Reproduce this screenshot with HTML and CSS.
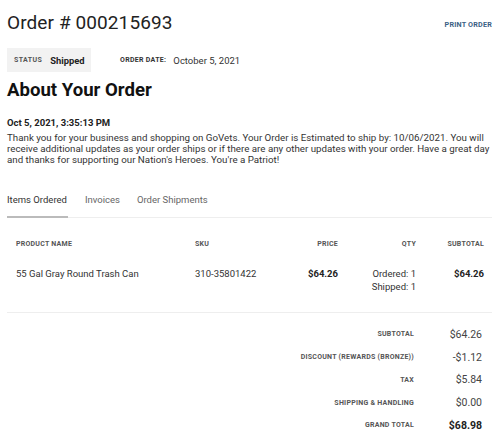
FILE: index.html
```html
<!DOCTYPE html>
<html>
<head>
<meta charset="utf-8">
<link rel="stylesheet" href="styles.css">
</head>
<body>
<div class="page">
  <div class="head">
    <h1 class="title">Order # 000215693</h1>
    <a class="print">PRINT ORDER</a>
  </div>
  <div class="meta">
    <div class="status"><span class="lbl">STATUS</span><span class="val">Shipped</span></div>
    <div class="date"><span class="lbl">ORDER DATE:</span><span class="dval">October 5, 2021</span></div>
  </div>
  <h2 class="about">About Your Order</h2>
  <div class="stamp">Oct 5, 2021, 3:35:13 PM</div>
  <p class="msg">Thank you for your business and shopping on GoVets. Your Order is Estimated to ship by: 10/06/2021. You will receive additional updates as your order ships or if there are any other updates with your order. Have a great day and thanks for supporting our Nation's Heroes. You're a Patriot!</p>
  <div class="tabs">
    <div class="tab active">Items Ordered</div>
    <div class="tab">Invoices</div>
    <div class="tab">Order Shipments</div>
  </div>
  <div class="items">
    <div class="row hdr">
      <div class="c-name">PRODUCT NAME</div>
      <div class="c-sku">SKU</div>
      <div class="c-price">PRICE</div>
      <div class="c-qty">QTY</div>
      <div class="c-sub">SUBTOTAL</div>
    </div>
    <div class="row item">
      <div class="c-name">55 Gal Gray Round Trash Can</div>
      <div class="c-sku">310-35801422</div>
      <div class="c-price b">$64.26</div>
      <div class="c-qty">Ordered: 1<br>Shipped: 1</div>
      <div class="c-sub b">$64.26</div>
    </div>
  </div>
  <div class="totals">
    <div class="trow"><span class="tl">SUBTOTAL</span><span class="tv">$64.26</span></div>
    <div class="trow"><span class="tl">DISCOUNT (REWARDS (BRONZE))</span><span class="tv">-$1.12</span></div>
    <div class="trow"><span class="tl">TAX</span><span class="tv">$5.84</span></div>
    <div class="trow"><span class="tl">SHIPPING &amp; HANDLING</span><span class="tv">$0.00</span></div>
    <div class="trow"><span class="tl">GRAND TOTAL</span><span class="tv b dark">$68.98</span></div>
  </div>
</div>
</body>
</html>
```

FILE: styles.css
```css
* { box-sizing: border-box; }
html, body { margin: 0; padding: 0; background: #fff; }
body { font-family: Roboto, "Noto Sans", sans-serif; color: #333; }
.page { padding: 10px 8px 0 7px; width: 500px; }
.head { display: flex; justify-content: space-between; align-items: center; height: 26px; }
.title { margin: 0; font-size: 19px; font-weight: 400; color: #222; letter-spacing: 0.1px; line-height: 26px; }
.print { font-size: 7.2px; font-weight: 700; color: #3a5f84; letter-spacing: 0.2px; margin-top: 2px; }
.meta { display: flex; align-items: center; margin-top: 12px; }
.status { background: #f2f2f2; height: 24px; width: 84px; display: flex; align-items: center; padding-left: 7px; }
.lbl { font-size: 7px; font-weight: 700; color: #555; letter-spacing: 0.4px; }
.val { font-size: 9.4px; font-weight: 700; color: #222; margin-left: 8px; }
.date { margin-left: 29px; display: flex; align-items: center; }
.date .lbl { color: #333; letter-spacing: 0.3px; }
.dval { font-size: 9.5px; color: #333; margin-left: 7px; }
.about { margin: 7px 0 0; font-size: 18.6px; font-weight: 700; color: #111; line-height: 22px; }
.stamp { margin-top: 16px; font-size: 9.5px; font-weight: 700; color: #222; line-height: 12px; }
.msg { margin: 3px 0 0; font-size: 9.75px; line-height: 11px; color: #333; }
.tabs { display: flex; margin-top: 26px; border-bottom: 1px solid #eee; width: 485px; }
.tab { font-size: 9.5px; color: #666; padding: 3px 0 11px; margin-right: 17px; }
.tab.active { color: #333; border-bottom: 2px solid #bbb; margin-bottom: -1px; padding-right: 1px; }
.items { border-bottom: 1px solid #eee; width: 485px; padding: 0 8px 19px 9px; }
.row { display: flex; }
.hdr { margin-top: 22px; font-size: 7px; font-weight: 700; color: #555; letter-spacing: 0.25px; }
.item { margin-top: 19px; font-size: 9.5px; color: #333; line-height: 13px; }
.c-name { width: 179px; }
.c-sku { width: 80px; }
.c-price { width: 63px; text-align: right; }
.c-qty { width: 78px; text-align: right; }
.c-sub { width: 68px; text-align: right; }
.b { font-weight: 700; color: #222; }
.totals { width: 485px; padding: 10px 10px 0 0; }
.trow { display: flex; justify-content: flex-end; align-items: center; height: 22.75px; }
.tl { font-size: 7px; font-weight: 700; color: #555; letter-spacing: 0.25px; }
.tv { width: 68px; text-align: right; font-size: 10.5px; color: #444; }
.tv.dark { color: #222; }
```
